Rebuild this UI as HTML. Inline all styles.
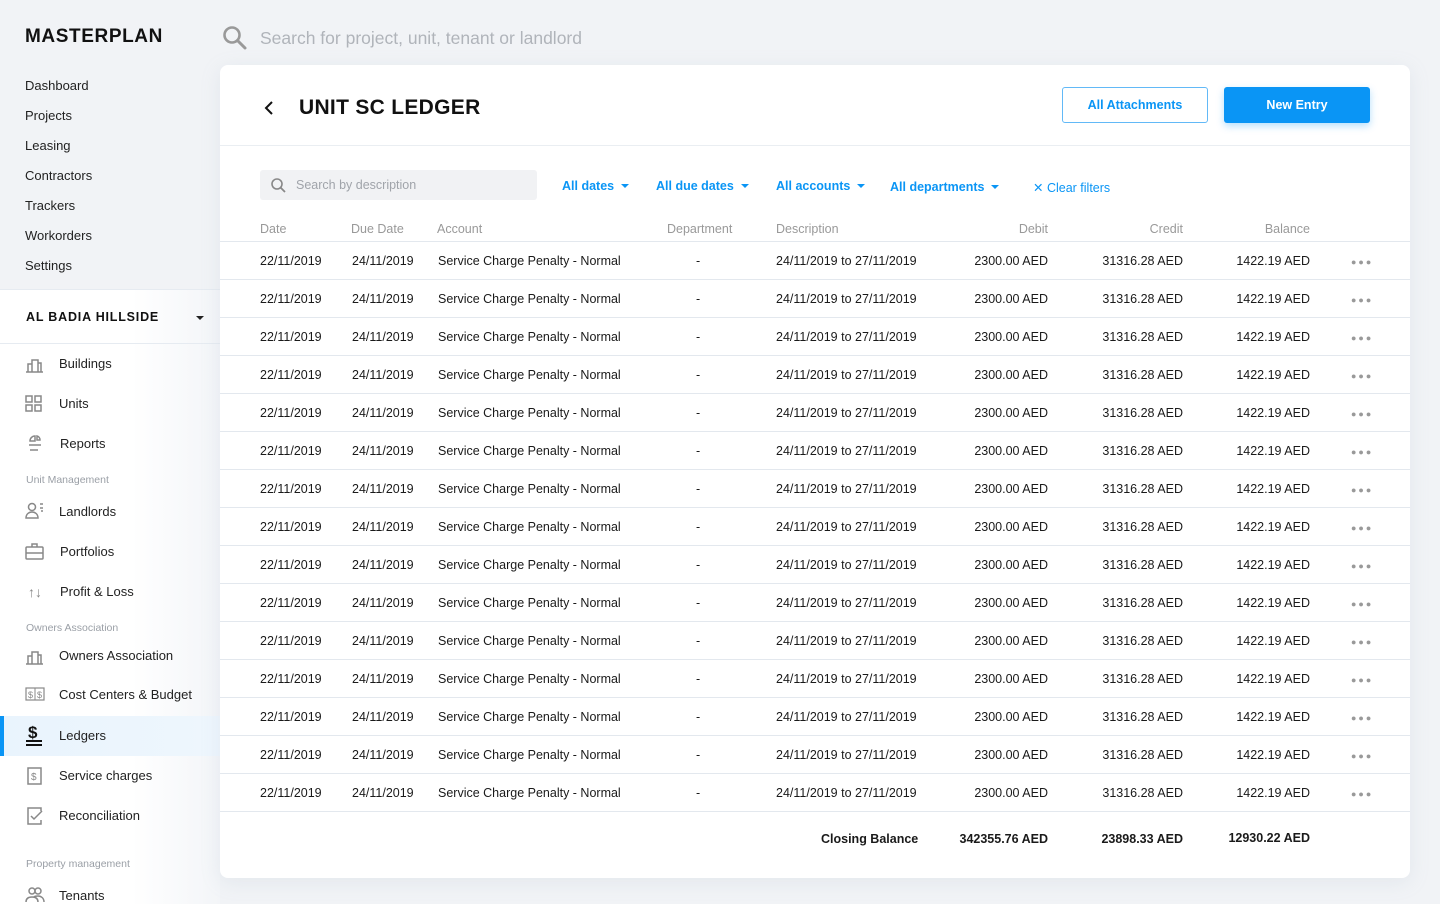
<!DOCTYPE html>
<html><head><meta charset="utf-8"><style>
*{box-sizing:border-box;margin:0;padding:0}
body{width:1440px;height:904px;overflow:hidden;background:#f1f3f6;font-family:"Liberation Sans",Arial,sans-serif;color:#1a1a1a;position:relative}
.a{position:absolute;white-space:nowrap}
.logo{left:25px;top:26px;font-size:19px;font-weight:bold;letter-spacing:.6px;color:#111}
.nav{left:25px;font-size:13px;color:#222}
.side2{position:absolute;left:0;top:289px;width:220px;height:615px;background:linear-gradient(90deg,#fff 0%,#fff 60%,#f3f5f8 100%);border-top:1px solid #e6ebf1}
.sec{left:26px;font-size:10.5px;color:#9a9fa6}
.item{left:59px;font-size:13px;color:#222}
.ic{position:absolute;left:25px}
.card{position:absolute;left:220px;top:65px;width:1190px;height:813px;background:#fff;border-radius:8px;box-shadow:0 4px 20px rgba(150,170,190,.15)}
.hd{font-size:12.5px;color:#999;top:157px}
.row{position:absolute;left:0;width:1190px;height:38px;border-bottom:1px solid #e3e8ee;font-size:12.5px;color:#1a1a1a}
.row span{position:absolute;top:0;line-height:38px;white-space:nowrap}
.c1{left:40px}.c2{left:132px}.c3{left:218px}.c4{left:476px}.c5{left:556px}
.c6{right:362px}.c7{right:227px}.c8{right:100px}
.row span.dots{left:1131px;top:1px;letter-spacing:2px;color:#999;font-size:9px}
.flt{top:114px;font-size:12.5px;color:#0a95f5;font-weight:bold}
.car{display:inline-block;width:0;height:0;border-left:4px solid transparent;border-right:4px solid transparent;border-top:4px solid #0a95f5;margin-left:7px;vertical-align:2px}
</style></head><body>
<div class="a logo">MASTERPLAN</div>
<svg class="a" style="left:222px;top:25px" width="26" height="26" viewBox="0 0 26 26"><circle cx="10" cy="10" r="7.5" fill="none" stroke="#999" stroke-width="2.6"/><line x1="15.5" y1="15.5" x2="23" y2="23" stroke="#999" stroke-width="3" stroke-linecap="round"/></svg>
<div class="a" style="left:260px;top:28px;font-size:17.5px;color:#b0b4ba">Search for project, unit, tenant or landlord</div>
<div class="a nav" style="top:78px">Dashboard</div>
<div class="a nav" style="top:108px">Projects</div>
<div class="a nav" style="top:138px">Leasing</div>
<div class="a nav" style="top:168px">Contractors</div>
<div class="a nav" style="top:198px">Trackers</div>
<div class="a nav" style="top:228px">Workorders</div>
<div class="a nav" style="top:258px">Settings</div>
<div class="side2"></div>
<div class="a" style="left:0;top:343px;width:220px;border-top:1px solid #e6ebf1"></div>
<div class="a" style="left:26px;top:310px;font-size:12.5px;font-weight:bold;letter-spacing:.8px;color:#111">AL BADIA HILLSIDE</div>
<div class="a" style="left:196px;top:316px;border-left:4px solid transparent;border-right:4px solid transparent;border-top:4px solid #222"></div>
<svg class="ic" style="top:355px" width="20" height="18"><path d="M1 17h17M3 17V9h4M7 17V5h6v12M13 8h3v9" fill="none" stroke="#888" stroke-width="1.5"/></svg>
<div class="a item" style="top:356px">Buildings</div>
<svg class="ic" style="top:395px" width="18" height="18"><rect x="1" y="1" width="6" height="6" fill="none" stroke="#888" stroke-width="1.5"/><rect x="10" y="1" width="6" height="6" fill="none" stroke="#888" stroke-width="1.5"/><rect x="1" y="10" width="6" height="6" fill="none" stroke="#888" stroke-width="1.5"/><rect x="10" y="10" width="6" height="6" fill="none" stroke="#888" stroke-width="1.5"/></svg>
<div class="a item" style="top:396px">Units</div>
<svg class="ic" style="top:434px;left:28px" width="14" height="20"><path d="M2 7a5 5 0 0 1 5-5v5zM9 2a4 4 0 0 1 3 4H9zM1 11h12M2 16h8" fill="none" stroke="#888" stroke-width="1.5"/></svg>
<div class="a item" style="top:436px;left:60px">Reports</div>
<div class="a sec" style="top:474px">Unit Management</div>
<svg class="ic" style="top:502px" width="20" height="18"><circle cx="7" cy="5" r="3.5" fill="none" stroke="#888" stroke-width="1.5"/><path d="M1 16c0-4 3-6 6-6s6 2 6 6zM15 2h3M15 6h3M16 9h2" fill="none" stroke="#888" stroke-width="1.5"/></svg>
<div class="a item" style="top:504px">Landlords</div>
<svg class="ic" style="top:543px" width="20" height="18"><rect x="1" y="4" width="17" height="12" rx="1" fill="none" stroke="#888" stroke-width="1.5"/><path d="M7 4V1h5v3M1 10h17" fill="none" stroke="#888" stroke-width="1.5"/></svg>
<div class="a item" style="top:544px;left:60px">Portfolios</div>
<div class="a" style="left:28px;top:584px;font-size:14px;color:#888">↑↓</div>
<div class="a item" style="top:584px;left:60px">Profit &amp; Loss</div>
<div class="a sec" style="top:622px">Owners Association</div>
<svg class="ic" style="top:647px" width="20" height="18"><path d="M1 17h17M3 17V9h4M7 17V5h6v12M13 8h3v9" fill="none" stroke="#888" stroke-width="1.5"/></svg>
<div class="a item" style="top:648px">Owners Association</div>
<svg class="ic" style="top:687px" width="20" height="14"><rect x="1" y="1" width="18" height="12" fill="none" stroke="#888" stroke-width="1.2"/><line x1="10" y1="1" x2="10" y2="13" stroke="#888"/><text x="3" y="11" font-size="9" fill="#888" font-family="Liberation Sans">$</text><text x="12" y="11" font-size="9" fill="#888" font-family="Liberation Sans">$</text></svg>
<div class="a item" style="top:687px">Cost Centers &amp; Budget</div>
<div class="a" style="left:0;top:716px;width:220px;height:40px;background:linear-gradient(90deg,#e9f4fd,#eef6fd)"></div>
<div class="a" style="left:0;top:716px;width:4px;height:40px;background:#0a95f5"></div>
<div class="a" style="left:28px;top:723px;font-size:17px;font-weight:bold;color:#111">$</div>
<div class="a" style="left:26px;top:740px;width:16px;height:2px;background:#111"></div>
<div class="a" style="left:26px;top:744px;width:16px;height:2px;background:#111"></div>
<div class="a item" style="top:728px">Ledgers</div>
<svg class="ic" style="top:767px;left:27px" width="16" height="19"><rect x="1" y="1" width="13" height="16" fill="none" stroke="#888" stroke-width="1.5"/><text x="4" y="13" font-size="10" fill="#888" font-family="Liberation Sans">$</text></svg>
<div class="a item" style="top:768px">Service charges</div>
<svg class="ic" style="top:807px;left:27px" width="18" height="19"><path d="M14 4V1H1v16h13v-4" fill="none" stroke="#888" stroke-width="1.5"/><path d="M4 9l3 3 8-8" fill="none" stroke="#888" stroke-width="1.5"/></svg>
<div class="a item" style="top:808px">Reconciliation</div>
<div class="a sec" style="top:858px">Property management</div>
<svg class="ic" style="top:886px" width="20" height="18"><circle cx="7" cy="5" r="3" fill="none" stroke="#888" stroke-width="1.5"/><circle cx="13" cy="5" r="3" fill="none" stroke="#888" stroke-width="1.5"/><path d="M1 16c0-4 3-5 6-5s6 1 6 5M9 11c1-1 3-1 4-1 3 0 6 2 6 6" fill="none" stroke="#888" stroke-width="1.5"/></svg>
<div class="a item" style="top:888px">Tenants</div>

<div class="card">
<svg class="a" style="left:43px;top:35px" width="12" height="16"><path d="M9 2L3 8l6 6" fill="none" stroke="#111" stroke-width="2"/></svg>
<div class="a" style="left:79px;top:31px;font-size:21px;font-weight:bold;letter-spacing:.3px;color:#111">UNIT SC LEDGER</div>
<div class="a" style="left:842px;top:22px;width:146px;height:36px;border:1px solid #62b9f7;border-radius:3px;color:#0a95f5;font-size:12.5px;font-weight:bold;text-align:center;line-height:34px">All Attachments</div>
<div class="a" style="left:1004px;top:22px;width:146px;height:36px;background:#0a95f5;border-radius:3px;color:#fff;font-size:12.5px;font-weight:bold;text-align:center;line-height:36px;box-shadow:0 3px 8px rgba(10,149,245,.3)">New Entry</div>
<div class="a" style="left:0;top:80px;width:1190px;border-top:1px solid #eaeef2"></div>
<div class="a" style="left:40px;top:105px;width:277px;height:30px;background:#f1f2f4;border-radius:3px"></div>
<svg class="a" style="left:50px;top:112px" width="17" height="17"><circle cx="7" cy="7" r="5" fill="none" stroke="#888" stroke-width="1.6"/><line x1="10.5" y1="10.5" x2="15" y2="15" stroke="#888" stroke-width="1.8"/></svg>
<div class="a" style="left:76px;top:113px;font-size:12.5px;color:#a0a4aa">Search by description</div>
<div class="a flt" style="left:342px">All dates<span class="car"></span></div>
<div class="a flt" style="left:436px">All due dates<span class="car"></span></div>
<div class="a flt" style="left:556px">All accounts<span class="car"></span></div>
<div class="a flt" style="left:670px;top:115px">All departments<span class="car"></span></div>
<div class="a flt" style="left:813px;top:115px;font-weight:normal">✕ Clear filters</div>
<div class="a hd" style="left:40px">Date</div>
<div class="a hd" style="left:131px">Due Date</div>
<div class="a hd" style="left:447px">Department</div>
<div class="a hd" style="left:217px">Account</div>
<div class="a hd" style="left:556px">Description</div>
<div class="a hd" style="right:362px">Debit</div>
<div class="a hd" style="right:227px">Credit</div>
<div class="a hd" style="right:100px">Balance</div>
<div class="a" style="left:0;top:176px;width:1190px;border-top:1px solid #e3e8ee"></div>

<div class="row" style="top:177px"><span class="c1">22/11/2019</span><span class="c2">24/11/2019</span><span class="c3">Service Charge Penalty - Normal</span><span class="c4">-</span><span class="c5">24/11/2019 to 27/11/2019</span><span class="c6">2300.00 AED</span><span class="c7">31316.28 AED</span><span class="c8">1422.19 AED</span><span class="dots">●●●</span></div>
<div class="row" style="top:215px"><span class="c1">22/11/2019</span><span class="c2">24/11/2019</span><span class="c3">Service Charge Penalty - Normal</span><span class="c4">-</span><span class="c5">24/11/2019 to 27/11/2019</span><span class="c6">2300.00 AED</span><span class="c7">31316.28 AED</span><span class="c8">1422.19 AED</span><span class="dots">●●●</span></div>
<div class="row" style="top:253px"><span class="c1">22/11/2019</span><span class="c2">24/11/2019</span><span class="c3">Service Charge Penalty - Normal</span><span class="c4">-</span><span class="c5">24/11/2019 to 27/11/2019</span><span class="c6">2300.00 AED</span><span class="c7">31316.28 AED</span><span class="c8">1422.19 AED</span><span class="dots">●●●</span></div>
<div class="row" style="top:291px"><span class="c1">22/11/2019</span><span class="c2">24/11/2019</span><span class="c3">Service Charge Penalty - Normal</span><span class="c4">-</span><span class="c5">24/11/2019 to 27/11/2019</span><span class="c6">2300.00 AED</span><span class="c7">31316.28 AED</span><span class="c8">1422.19 AED</span><span class="dots">●●●</span></div>
<div class="row" style="top:329px"><span class="c1">22/11/2019</span><span class="c2">24/11/2019</span><span class="c3">Service Charge Penalty - Normal</span><span class="c4">-</span><span class="c5">24/11/2019 to 27/11/2019</span><span class="c6">2300.00 AED</span><span class="c7">31316.28 AED</span><span class="c8">1422.19 AED</span><span class="dots">●●●</span></div>
<div class="row" style="top:367px"><span class="c1">22/11/2019</span><span class="c2">24/11/2019</span><span class="c3">Service Charge Penalty - Normal</span><span class="c4">-</span><span class="c5">24/11/2019 to 27/11/2019</span><span class="c6">2300.00 AED</span><span class="c7">31316.28 AED</span><span class="c8">1422.19 AED</span><span class="dots">●●●</span></div>
<div class="row" style="top:405px"><span class="c1">22/11/2019</span><span class="c2">24/11/2019</span><span class="c3">Service Charge Penalty - Normal</span><span class="c4">-</span><span class="c5">24/11/2019 to 27/11/2019</span><span class="c6">2300.00 AED</span><span class="c7">31316.28 AED</span><span class="c8">1422.19 AED</span><span class="dots">●●●</span></div>
<div class="row" style="top:443px"><span class="c1">22/11/2019</span><span class="c2">24/11/2019</span><span class="c3">Service Charge Penalty - Normal</span><span class="c4">-</span><span class="c5">24/11/2019 to 27/11/2019</span><span class="c6">2300.00 AED</span><span class="c7">31316.28 AED</span><span class="c8">1422.19 AED</span><span class="dots">●●●</span></div>
<div class="row" style="top:481px"><span class="c1">22/11/2019</span><span class="c2">24/11/2019</span><span class="c3">Service Charge Penalty - Normal</span><span class="c4">-</span><span class="c5">24/11/2019 to 27/11/2019</span><span class="c6">2300.00 AED</span><span class="c7">31316.28 AED</span><span class="c8">1422.19 AED</span><span class="dots">●●●</span></div>
<div class="row" style="top:519px"><span class="c1">22/11/2019</span><span class="c2">24/11/2019</span><span class="c3">Service Charge Penalty - Normal</span><span class="c4">-</span><span class="c5">24/11/2019 to 27/11/2019</span><span class="c6">2300.00 AED</span><span class="c7">31316.28 AED</span><span class="c8">1422.19 AED</span><span class="dots">●●●</span></div>
<div class="row" style="top:557px"><span class="c1">22/11/2019</span><span class="c2">24/11/2019</span><span class="c3">Service Charge Penalty - Normal</span><span class="c4">-</span><span class="c5">24/11/2019 to 27/11/2019</span><span class="c6">2300.00 AED</span><span class="c7">31316.28 AED</span><span class="c8">1422.19 AED</span><span class="dots">●●●</span></div>
<div class="row" style="top:595px"><span class="c1">22/11/2019</span><span class="c2">24/11/2019</span><span class="c3">Service Charge Penalty - Normal</span><span class="c4">-</span><span class="c5">24/11/2019 to 27/11/2019</span><span class="c6">2300.00 AED</span><span class="c7">31316.28 AED</span><span class="c8">1422.19 AED</span><span class="dots">●●●</span></div>
<div class="row" style="top:633px"><span class="c1">22/11/2019</span><span class="c2">24/11/2019</span><span class="c3">Service Charge Penalty - Normal</span><span class="c4">-</span><span class="c5">24/11/2019 to 27/11/2019</span><span class="c6">2300.00 AED</span><span class="c7">31316.28 AED</span><span class="c8">1422.19 AED</span><span class="dots">●●●</span></div>
<div class="row" style="top:671px"><span class="c1">22/11/2019</span><span class="c2">24/11/2019</span><span class="c3">Service Charge Penalty - Normal</span><span class="c4">-</span><span class="c5">24/11/2019 to 27/11/2019</span><span class="c6">2300.00 AED</span><span class="c7">31316.28 AED</span><span class="c8">1422.19 AED</span><span class="dots">●●●</span></div>
<div class="row" style="top:709px"><span class="c1">22/11/2019</span><span class="c2">24/11/2019</span><span class="c3">Service Charge Penalty - Normal</span><span class="c4">-</span><span class="c5">24/11/2019 to 27/11/2019</span><span class="c6">2300.00 AED</span><span class="c7">31316.28 AED</span><span class="c8">1422.19 AED</span><span class="dots">●●●</span></div>

<div class="a" style="left:601px;top:767px;font-size:12.5px;font-weight:bold">Closing Balance</div>
<div class="a" style="right:362px;top:767px;font-size:12.5px;font-weight:bold">342355.76 AED</div>
<div class="a" style="right:227px;top:767px;font-size:12.5px;font-weight:bold">23898.33 AED</div>
<div class="a" style="right:100px;top:766px;font-size:12.5px;font-weight:bold">12930.22 AED</div>
</div>
</body></html>
